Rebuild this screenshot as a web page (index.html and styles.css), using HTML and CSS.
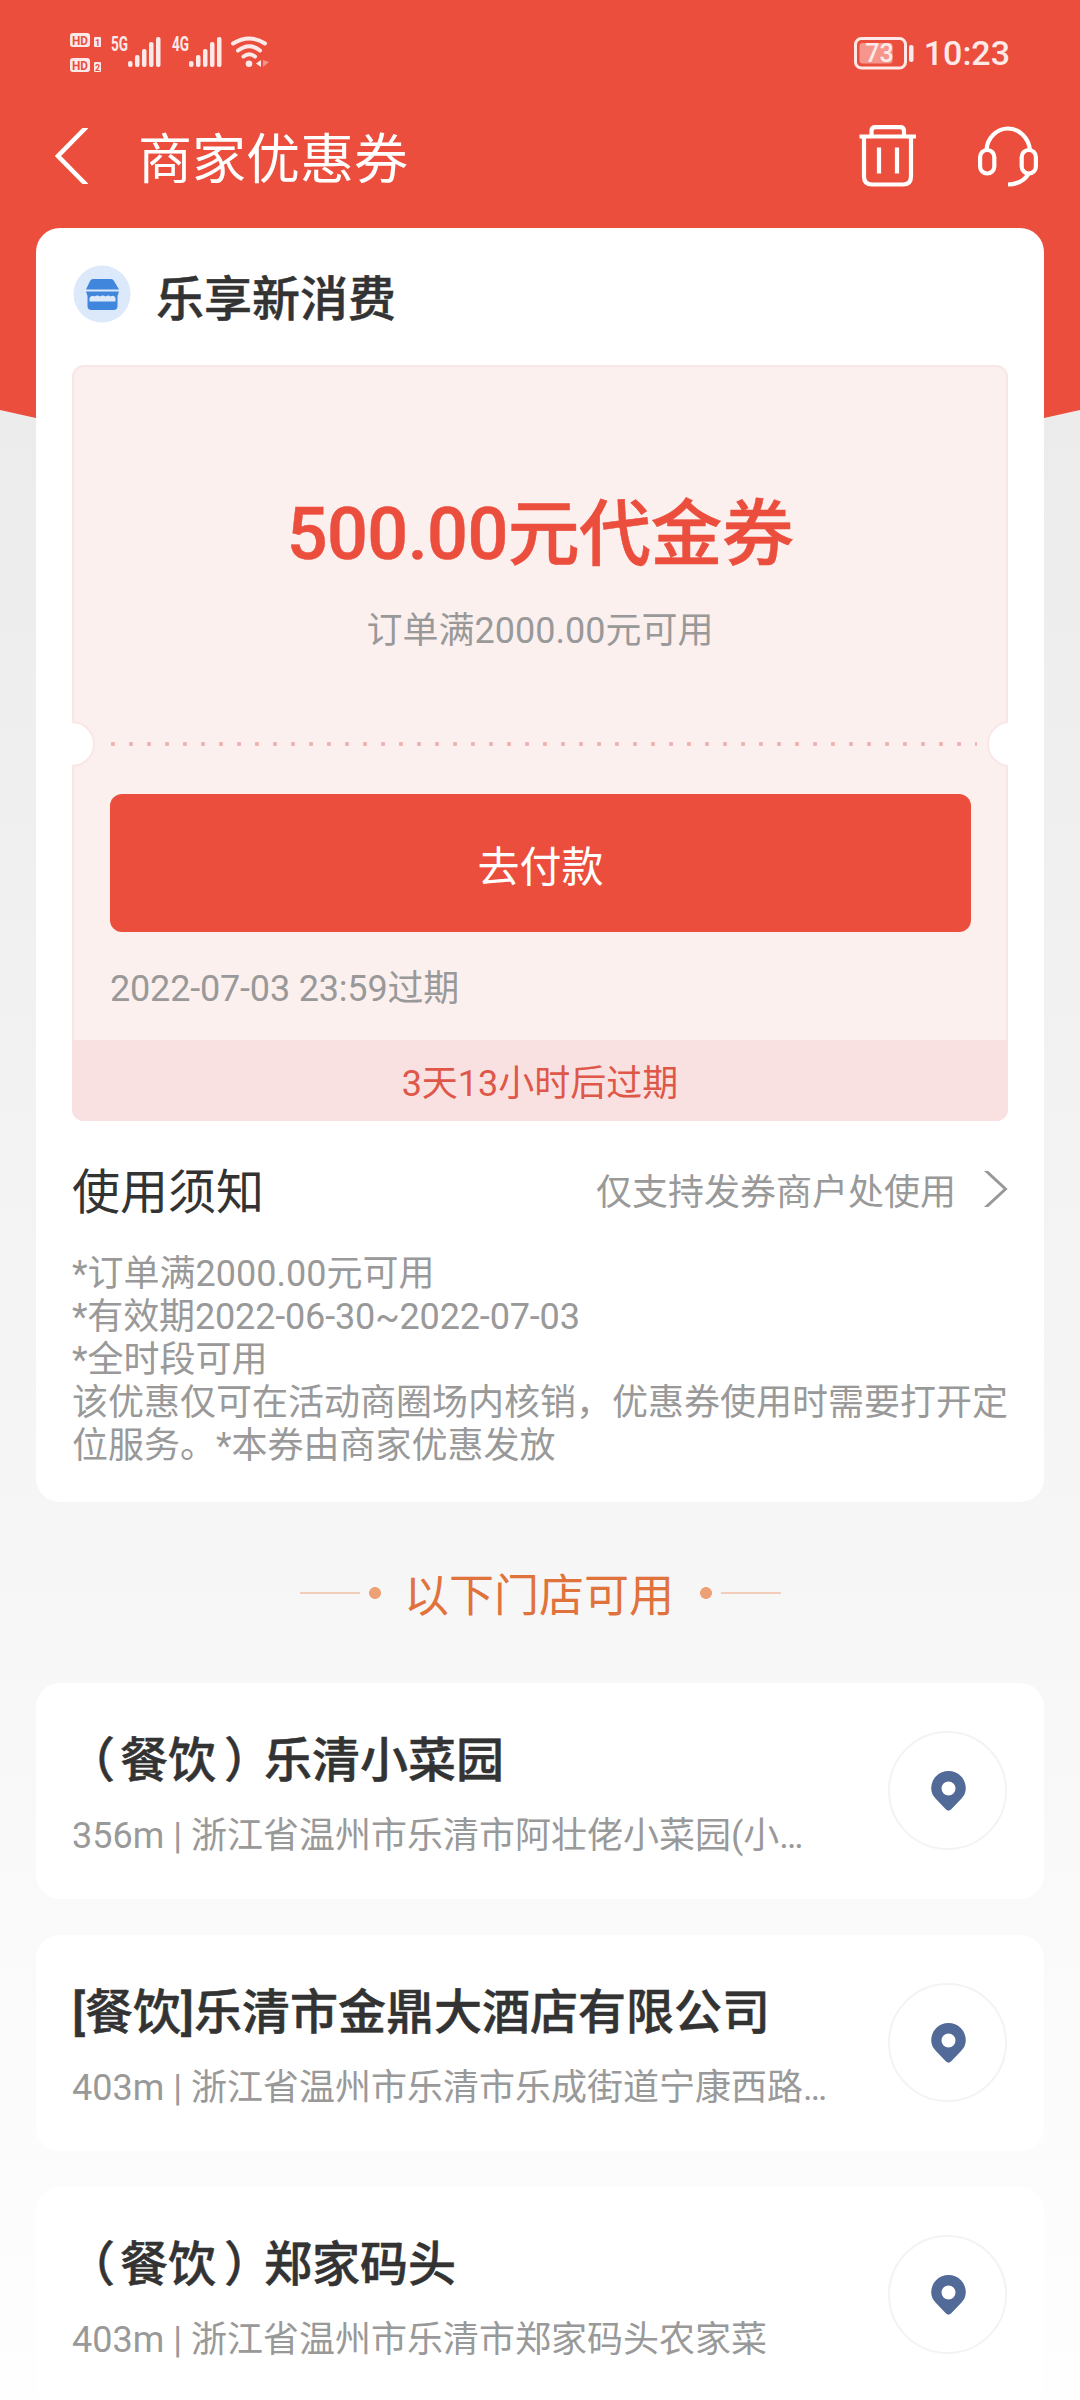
FILE: index.html
```html
<!DOCTYPE html>
<html lang="zh-CN">
<head>
  <meta charset="UTF-8">
  <meta name="viewport" content="width=device-width, initial-scale=1.0">
  <title>商家优惠券</title>
  <link rel="stylesheet" href="styles.css">
</head>
<body>
  <header>
    <div class="status-bar">
      <svg class="status-left" width="210" height="48" viewBox="0 0 210 48" fill="#fdeae8">
        <rect x="0" y="3" width="20" height="14" rx="3"/>
        <rect x="24" y="7" width="7" height="10" rx="1"/>
        <rect x="0" y="28" width="20" height="14" rx="3"/>
        <rect x="24" y="32" width="7" height="10" rx="1"/>
        <g class="badge-text">
          <text x="2" y="14.5" font-size="13" textLength="16" lengthAdjust="spacingAndGlyphs">HD</text>
          <text x="25" y="15.5" font-size="9">1</text>
          <text x="2" y="39.5" font-size="13" textLength="16" lengthAdjust="spacingAndGlyphs">HD</text>
          <text x="25" y="40.5" font-size="9">2</text>
        </g>
        <text class="net" x="41" y="20.5" textLength="17" lengthAdjust="spacingAndGlyphs">5G</text>
        <text class="net" x="102" y="20.5" textLength="17" lengthAdjust="spacingAndGlyphs">4G</text>
        <g id="bars">
          <rect x="58" y="31" width="4.500" height="6" rx="2"/>
          <rect x="65" y="25" width="4.500" height="12" rx="2"/>
          <rect x="72" y="19" width="4.500" height="18" rx="2"/>
          <rect x="79" y="12" width="4.500" height="25" rx="2"/>
          <rect x="86" y="7" width="4.500" height="30" rx="2"/>
        </g>
        <use href="#bars" x="61"/>
        <g fill="none" stroke="#fdeae8" stroke-width="4" stroke-linecap="round">
          <path d="M163 13.500Q179.500 3.500 195 13.500"/>
          <path d="M168 20.500Q179.500 12 190 20.500"/>
          <path d="M173.500 26.500Q179.500 22 185 26.500"/>
        </g>
        <circle cx="179" cy="33.700" r="3.300"/>
        <path d="M191 30V37L186 33.500z"/>
        <path d="M193 30V37L199 32z" opacity=".45"/>
      </svg>
      <div class="status-right">
        <svg width="60" height="33" viewBox="0 0 60 33">
          <rect x="1.500" y="1.500" width="50" height="29.500" rx="6" fill="none" stroke="#fdeae8" stroke-width="3"/>
          <rect x="5.500" y="6" width="33" height="20.500" rx="3" fill="#f5958b"/>
          <rect x="55" y="8" width="4.500" height="17" rx="2" fill="#fdeae8"/>
          <text x="25.500" y="25" text-anchor="middle" class="level">73</text>
        </svg>
        <span>10:23</span>
      </div>
    </div>
    <nav>
      <svg width="34" height="56" viewBox="0 0 34 56" fill="none" stroke="#fff" stroke-width="4.500"><path d="M31.500 -1L3 28L31.500 57"/></svg>
      <h1>商家优惠券</h1>
      <svg class="trash" width="58" height="62" viewBox="0 0 58 62" fill="none" stroke="#fff" stroke-width="4.200">
        <path d="M12.500 10V6Q12.500 2.200 16.500 2.200H41Q45 2.200 45 6V10M0.500 11.500H57M5 12V51.500Q5 59.500 13 59.500H44Q52 59.500 52 51.500V12M20 22.500V48.500M38 22.500V48.500"/>
      </svg>
      <svg width="60" height="61" viewBox="0 0 60 61" fill="none" stroke="#fff" stroke-width="4.200">
        <rect x="2.100" y="24" width="14.200" height="23.500" rx="7.100"/>
        <rect x="43.700" y="24" width="14.200" height="23.500" rx="7.100"/>
        <path d="M8.500 24Q9 15 15 9Q21.500 2.500 30 2.500T45 9Q51 15 52 24M51 47Q45 58 30 58.500"/>
      </svg>
    </nav>
  </header>

  <main>
    <section class="card">
      <div class="merchant">
        <svg width="58" height="58" viewBox="0 0 58 58">
          <circle cx="29" cy="29" r="28.500" fill="#dbe9fb"/>
          <path d="M20 14H38Q40 14 41 16L46 24.500H13L17 16Q18 14 20 14z" fill="#3f86dc"/>
          <path d="M13 26.500H46L44.500 31V41Q44.500 45 40.500 45H18.500Q14.500 45 14.500 41V31z" fill="#3f86dc"/>
          <path d="M16.500 33Q19 29.500 21.500 31.500Q24.500 29.500 27 31.500Q30 29.500 32.500 31.500Q35.500 29.500 37.500 31.500Q41 29.500 42.500 33V36.500H16.500z" fill="#dbe9fb"/>
        </svg>
        <h2>乐享新消费</h2>
      </div>

      <div class="coupon">
        <div class="coupon-top">
          <p class="amount">500.00元代金券</p>
          <p class="condition">订单满2000.00元可用</p>
        </div>
        <div class="divider"></div>
        <button class="pay">去付款</button>
        <p class="expire">2022-07-03 23:59过期</p>
        <div class="countdown">3天13小时后过期</div>
      </div>

      <div class="notice-head">
        <h3>使用须知</h3>
        <span>仅支持发券商户处使用</span>
        <svg width="25" height="36" viewBox="0 0 25 36" fill="none" stroke="#999" stroke-width="3"><path d="M2 -1L22.500 18L2 37"/></svg>
      </div>
      <div class="notice">
        <p>*订单满2000.00元可用</p>
        <p class="dates">*有效期2022-06-30~2022-07-03</p>
        <p>*全时段可用</p>
        <p>该优惠仅可在活动商圈场内核销，优惠券使用时需要打开定位服务。*本券由商家优惠发放</p>
      </div>
    </section>

    <div class="section-title"><span>以下门店可用</span></div>

    <svg width="0" height="0" class="defs">
      <symbol id="pin" viewBox="0 0 35 40">
        <path fill="#526a97" fill-rule="evenodd" d="M17.500 0A17.300 17.300 0 0 1 34.800 17.300Q34.800 23 30.500 27.500L20 38.500Q17.500 40.800 15 38.500L4.500 27.500Q.2 23 .2 17.300A17.300 17.300 0 0 1 17.500 0zM17.500 10.500A7 7 0 1 0 17.500 24.500A7 7 0 1 0 17.500 10.500z"/>
      </symbol>
    </svg>

    <div class="store">
      <div class="info">
        <h4><span class="open">（</span>餐饮<span class="close">）</span>乐清小菜园</h4>
        <p>356m | 浙江省温州市乐清市阿壮佬小菜园(小…</p>
      </div>
      <a class="locate"><svg width="35" height="40"><use href="#pin"/></svg></a>
    </div>
    <div class="store">
      <div class="info">
        <h4>[餐饮]乐清市金鼎大酒店有限公司</h4>
        <p>403m | 浙江省温州市乐清市乐成街道宁康西路…</p>
      </div>
      <a class="locate"><svg width="35" height="40"><use href="#pin"/></svg></a>
    </div>
    <div class="store">
      <div class="info">
        <h4><span class="open">（</span>餐饮<span class="close">）</span>郑家码头</h4>
        <p>403m | 浙江省温州市乐清市郑家码头农家菜</p>
      </div>
      <a class="locate"><svg width="35" height="40"><use href="#pin"/></svg></a>
    </div>
  </main>
</body>
</html>
```
FILE: styles.css
```css
*, *::before, *::after {
  box-sizing: border-box;
  margin: 0;
  padding: 0;
}
body {
  width: 1080px;
  height: 2400px;
  overflow: hidden;
  font-family: Roboto, "Noto Sans CJK SC", sans-serif;
  font-size: 36px;
  color: #333;
  background: linear-gradient(#e8e8e8, #fefefe);
}
svg {
  display: block;
  flex-shrink: 0;
}
h1, h2, h3, h4 {
  font-weight: 400;
}

/* red header, its lower edge comes to a shallow point */
header {
  height: 530px;
  margin-bottom: -302px;
  background: #eb4e3d;
  clip-path: polygon(0 0, 100% 0, 100% 410px, 50% 530px, 0 410px);
}
.status-bar {
  height: 106px;
  padding: 30px 70px 0;
  display: flex;
  justify-content: space-between;
}
.badge-text {
  fill: #eb4e3d;
  font-weight: 700;
}
.net {
  font-size: 20px;
  font-weight: 700;
}
.status-right {
  display: flex;
  align-items: center;
  gap: 10px;
  height: 46px;
  color: #fdeae8;
  font-size: 34px;
  font-weight: 500;
}
.level {
  fill: #fdeae8;
  font-size: 25px;
  font-weight: 500;
}
nav {
  height: 100px;
  padding: 0 42px 0 55px;
  display: flex;
  align-items: center;
}
nav h1 {
  flex: 1;
  margin-left: 49px;
  padding-top: 9px;
  font-size: 54px;
  line-height: 91px;
  color: #fff;
}
nav .trash {
  margin-right: 61px;
}

main {
  position: relative;
  padding: 0 36px;
}
.card {
  height: 1274px;
  padding: 0 36px;
  background: #fff;
  border-radius: 24px;
}
.merchant {
  height: 137px;
  display: flex;
  align-items: center;
  gap: 25px;
  padding-left: 1px;
}
.merchant svg {
  margin-top: -5px;
}
.merchant h2 {
  margin-top: -4px;
  font-size: 48px;
  font-weight: 500;
}
.merchant h2, .amount, .info h4 {
  -webkit-text-stroke: 0.5px;
}

.coupon {
  height: 756px;
  overflow: hidden;
  background: #fcf0ef;
  border-radius: 12px;
  box-shadow: inset 0 0 0 2px #f9e7e7;
}
.coupon-top {
  height: 356px;
  padding-top: 122px;
  text-align: center;
}
.amount {
  font-size: 72px;
  font-weight: 500;
  line-height: 96px;
  letter-spacing: -0.6px;
  color: #eb4e3d;
}
.condition {
  margin-top: 23px;
  line-height: 50px;
  color: #999;
}
.divider {
  position: relative;
  height: 46px;
  padding: 21px 31px 21px 38px;
  background: radial-gradient(circle, #edb5b1 2px, transparent 2.4px) 32px 50% / 18px 18px repeat-x content-box;
  background-origin: border-box;
}
.divider::before, .divider::after {
  content: "";
  position: absolute;
  top: 0;
  left: -23px;
  width: 46px;
  height: 46px;
  border: 2px solid #f9e7e7;
  border-radius: 50%;
  background: #fff;
}
.divider::after {
  left: auto;
  right: -25px;
}
.pay {
  display: block;
  width: 861px;
  height: 138px;
  margin: 27px 0 0 38px;
  border: none;
  border-radius: 12px;
  background: #eb4e3d;
  color: #fff;
  font-family: inherit;
  font-size: 42px;
}
.expire {
  height: 108px;
  padding-left: 38px;
  line-height: 114px;
  letter-spacing: -0.18px;
  color: #999;
}
.countdown {
  height: 81px;
  line-height: 88px;
  text-align: center;
  background: #f9e1e1;
  color: #de5748;
}

.notice-head {
  display: flex;
  align-items: center;
  height: 126px;
  margin-top: 4px;
}
.notice-head h3 {
  flex: 1;
  font-size: 48px;
}
.notice-head span {
  margin-right: 27px;
  padding-top: 2px;
  color: #999;
}
.notice-head svg {
  margin-top: 1px;
}
.notice {
  margin-top: 2px;
  line-height: 43px;
  color: #999;
}
.dates {
  letter-spacing: -0.15px;
}

.section-title {
  display: flex;
  align-items: center;
  justify-content: center;
  height: 181px;
  padding-left: 1px;
  font-size: 45px;
  color: #e0723c;
}
.section-title span {
  margin: 0 26px 0 23px;
}
/* line and dot on each side of the title */
.section-title::before, .section-title::after {
  content: "";
  width: 81px;
  height: 12px;
  background:
    radial-gradient(circle at 75px 6px, #eea077 5.6px, transparent 6.2px),
    linear-gradient(#f2ceba, #f2ceba) 0 5px / 60px 2px no-repeat;
}
.section-title::after {
  transform: scaleX(-1);
}
.defs {
  position: absolute;
}

.store {
  display: flex;
  align-items: center;
  justify-content: space-between;
  height: 216px;
  margin-bottom: 36px;
  padding: 0 37px 0 36px;
  background: #fff;
  border-radius: 24px;
}
.info {
  padding-top: 5px;
}
.info h4 {
  font-size: 48px;
  font-weight: 500;
  line-height: 70px;
}
/* half-width parentheses, spaced so each still takes 48px */
.open, .close {
  font-feature-settings: "halt";
}
.open {
  margin: 0 5px 0 19px;
}
.close {
  margin: 0 16px 0 8px;
}
.info p {
  margin-top: 14px;
  line-height: 52px;
  color: #999;
}
.locate {
  display: flex;
  align-items: center;
  justify-content: center;
  width: 119px;
  height: 119px;
  margin-top: -1px;
  padding-left: 2px;
  border: 2px solid #f3f3f3;
  border-radius: 50%;
}
```
